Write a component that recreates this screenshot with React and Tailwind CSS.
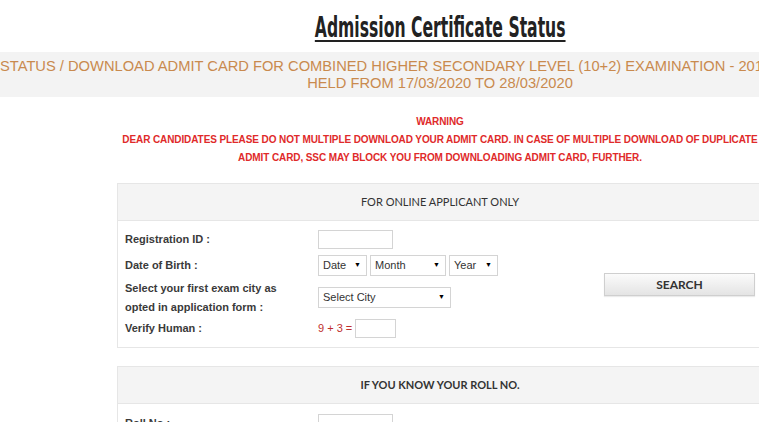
import React from "react";

function Sel({ w, label }) {
  return (
    <div
      className={`flex items-center justify-between h-[21px] border border-[#d4d4d4] bg-white pl-[4px] pr-[5px] text-[11px] text-[#333] ${w}`}
    >
      <span>{label}</span>
      <span className="text-[7px] text-black">▼</span>
    </div>
  );
}

function Panel({ title, bold, children, mt }) {
  return (
    <div className={`ml-[117px] w-[646px] border border-[#e6e6e6] ${mt}`}>
      <div
        className={`h-[37px] flex items-center justify-center bg-[#f4f4f4] border-b border-[#e6e6e6] text-[11px] text-[#333] ${bold ? "font-bold" : ""}`}
        style={{ fontFamily: "Lato, 'Liberation Sans', sans-serif" }}
      >
        {title}
      </div>
      {children}
    </div>
  );
}

export default function App() {
  return (
    <div
      className="w-[759px] h-[422px] overflow-hidden bg-white"
      style={{ fontFamily: "'Liberation Sans', Arial, sans-serif" }}
    >
      <div className="w-[880px]">
        <div className="h-[52px] flex justify-center pt-[11px]">
          <h1
            className="text-[28px] leading-[34px] font-bold text-[#222] underline decoration-2 underline-offset-[3px] scale-x-[0.62]"
            style={{ fontFamily: "'DejaVu Sans Condensed', 'Liberation Sans', sans-serif" }}
          >
            Admission Certificate Status
          </h1>
        </div>
        <div className="bg-[#f3f3f3] h-[45px] pt-[6px] text-[14.7px] leading-[17px] text-[#c98a4e]">
          <div className="whitespace-nowrap">
            STATUS / DOWNLOAD ADMIT CARD FOR COMBINED HIGHER SECONDARY LEVEL (10+2) EXAMINATION - 2019
          </div>
          <div className="text-center">HELD FROM 17/03/2020 TO 28/03/2020</div>
        </div>
        <div className="mt-[16px] text-center text-[10px] leading-[18px] font-bold tracking-[-0.1px] text-[#e02a2a] whitespace-nowrap">
          WARNING
          <br />
          DEAR CANDIDATES PLEASE DO NOT MULTIPLE DOWNLOAD YOUR ADMIT CARD. IN CASE OF MULTIPLE DOWNLOAD OF DUPLICATE
          <br />
          ADMIT CARD, SSC MAY BLOCK YOU FROM DOWNLOADING ADMIT CARD, FURTHER.
        </div>

        <Panel title="FOR ONLINE APPLICANT ONLY" mt="mt-[16px]">
          <div className="pt-[7px] pb-[6px] pl-[7px] grid grid-cols-[193px_286px_151px] text-[11px] text-[#3a3a3a] font-bold">
            <div className="h-[22px] flex items-center">Registration ID :</div>
            <div className="h-[22px] flex items-center">
              <div className="w-[75px] h-[19px] border border-[#d4d4d4] bg-white" />
            </div>
            <div className="row-span-4 flex items-center">
              <button
                className="w-[151px] h-[23px] border border-[#cfcfcf] bg-gradient-to-b from-[#fbfbfb] to-[#e4e4e4] text-[12px] font-bold text-[#333] shadow-[0_1px_1px_rgba(0,0,0,0.08)]"
                style={{ fontFamily: "Lato, 'Liberation Sans', sans-serif" }}
              >
                SEARCH
              </button>
            </div>

            <div className="h-[30px] flex items-center">Date of Birth :</div>
            <div className="h-[30px] flex items-center gap-[3px] font-normal">
              <Sel w="w-[49px]" label="Date" />
              <Sel w="w-[76px]" label="Month" />
              <Sel w="w-[49px]" label="Year" />
            </div>

            <div className="h-[35px] flex items-center leading-[19px]">
              <span>
                Select your first exam city as
                <br />
                opted in application form :
              </span>
            </div>
            <div className="h-[35px] flex items-center font-normal">
              <Sel w="w-[133px]" label="Select City" />
            </div>

            <div className="h-[26px] flex items-center">Verify Human :</div>
            <div className="h-[26px] flex items-center gap-[3px] font-normal">
              <span className="text-[#c0302e] text-[11px] whitespace-nowrap">9 + 3 =</span>
              <div className="w-[41px] h-[19px] border border-[#d4d4d4] bg-white" />
            </div>
          </div>
        </Panel>

        <Panel title="IF YOU KNOW YOUR ROLL NO." bold mt="mt-[18px]">
          <div className="pt-[8px] pl-[7px] grid grid-cols-[193px_286px] text-[11px] text-[#3a3a3a] font-bold">
            <div className="h-[22px] flex items-center">Roll No :</div>
            <div className="h-[22px] flex items-center">
              <div className="w-[75px] h-[19px] border border-[#d4d4d4] bg-white" />
            </div>
          </div>
        </Panel>
      </div>
    </div>
  );
}
